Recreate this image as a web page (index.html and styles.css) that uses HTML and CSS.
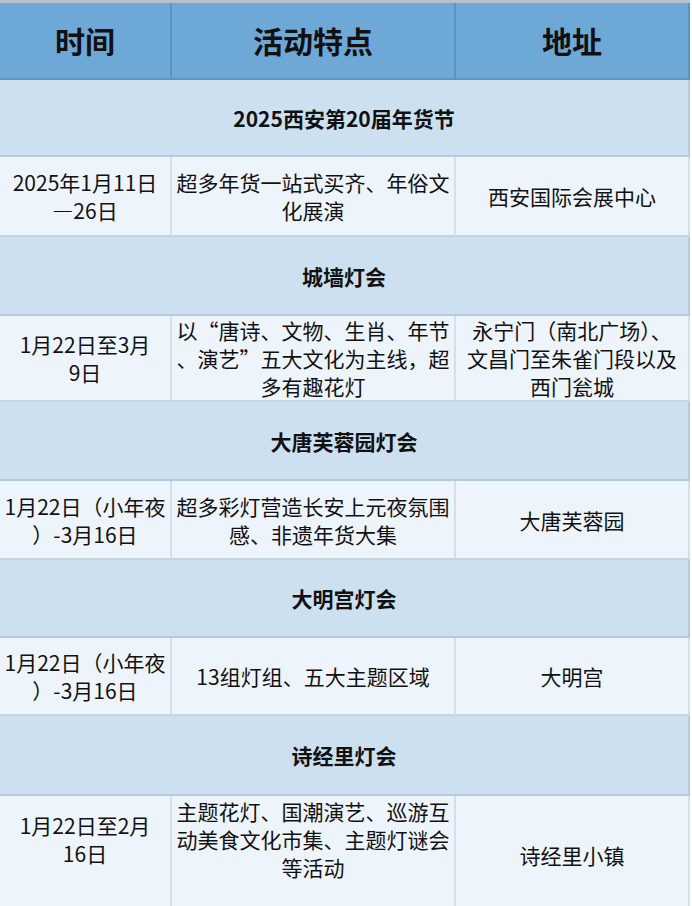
FILE: index.html
```html
<!DOCTYPE html>
<html lang="zh-CN">
<head>
<meta charset="utf-8">
<title>2025西安年货节与灯会</title>
<link rel="stylesheet" href="styles.css">
</head>
<body>
<div class="sheet">
  <div class="cell head"><span class="txt">时间</span></div>
  <div class="cell head"><span class="txt">活动特点</span></div>
  <div class="cell head"><span class="txt">地址</span></div>

  <div class="cell section"><span class="txt">2025西安第20届年货节</span></div>
  <div class="cell data"><span class="txt">2025年1月11日<br>—26日</span></div>
  <div class="cell data"><span class="txt">超多年货一站式买齐、年俗文<br>化展演</span></div>
  <div class="cell data"><span class="txt">西安国际会展中心</span></div>

  <div class="cell section"><span class="txt">城墙灯会</span></div>
  <div class="cell data"><span class="txt">1月22日至3月<br>9日</span></div>
  <div class="cell data"><span class="txt">以“唐诗、文物、生肖、年节<br>、演艺”五大文化为主线，超<br>多有趣花灯</span></div>
  <div class="cell data"><span class="txt">永宁门（南北广场）、<br>文昌门至朱雀门段以及<br>西门瓮城</span></div>

  <div class="cell section"><span class="txt">大唐芙蓉园灯会</span></div>
  <div class="cell data"><span class="txt">1月22日（小年夜<br>）-3月16日</span></div>
  <div class="cell data"><span class="txt">超多彩灯营造长安上元夜氛围<br>感、非遗年货大集</span></div>
  <div class="cell data"><span class="txt">大唐芙蓉园</span></div>

  <div class="cell section"><span class="txt">大明宫灯会</span></div>
  <div class="cell data"><span class="txt">1月22日（小年夜<br>）-3月16日</span></div>
  <div class="cell data"><span class="txt">13组灯组、五大主题区域</span></div>
  <div class="cell data"><span class="txt">大明宫</span></div>

  <div class="cell section"><span class="txt">诗经里灯会</span></div>
  <div class="cell data raise"><span class="txt">1月22日至2月<br>16日</span></div>
  <div class="cell data raise"><span class="txt">主题花灯、国潮演艺、巡游互<br>动美食文化市集、主题灯谜会<br>等活动</span></div>
  <div class="cell data"><span class="txt">诗经里小镇</span></div>
</div>
</body>
</html>
```

FILE: styles.css
```css
html, body {
  margin: 0;
  padding: 0;
  background: #ffffff;
}

body {
  font-family: "Noto Sans CJK SC", "Noto Sans", sans-serif;
  color: #111111;
  overflow: hidden;
}

.sheet {
  width: 690px;
  display: grid;
  grid-template-columns: 172px 284px 234px;
  grid-template-rows: 77px 77px 80px 79px 86px 79px 79px 78px 78px 80px 120px;
  border-top: 3px solid #b8c0c8;
}

.cell {
  box-sizing: border-box;
  display: flex;
  align-items: center;
  justify-content: center;
  text-align: center;
  white-space: nowrap;
  padding: 0 3px;
}

.txt {
  display: block;
}

.head {
  background: #6ea8d6;
  font-size: 30px;
  font-weight: 700;
  border-right: 2px solid #5a94c3;
  border-bottom: 2px solid #5a94c3;
  padding-bottom: 2px;
}

.section {
  grid-column: 1 / 4;
  background: #cde0ef;
  font-size: 21px;
  font-weight: 700;
  border-bottom: 2px solid #b6cadc;
  border-right: 2px solid #b6cadc;
}

.data {
  background: #eef4fb;
  font-size: 21px;
  line-height: 28px;
  border-right: 2px solid #d2e0ec;
  border-bottom: 2px solid #c3d4e3;
}

.raise {
  padding-bottom: 32px;
}
```
